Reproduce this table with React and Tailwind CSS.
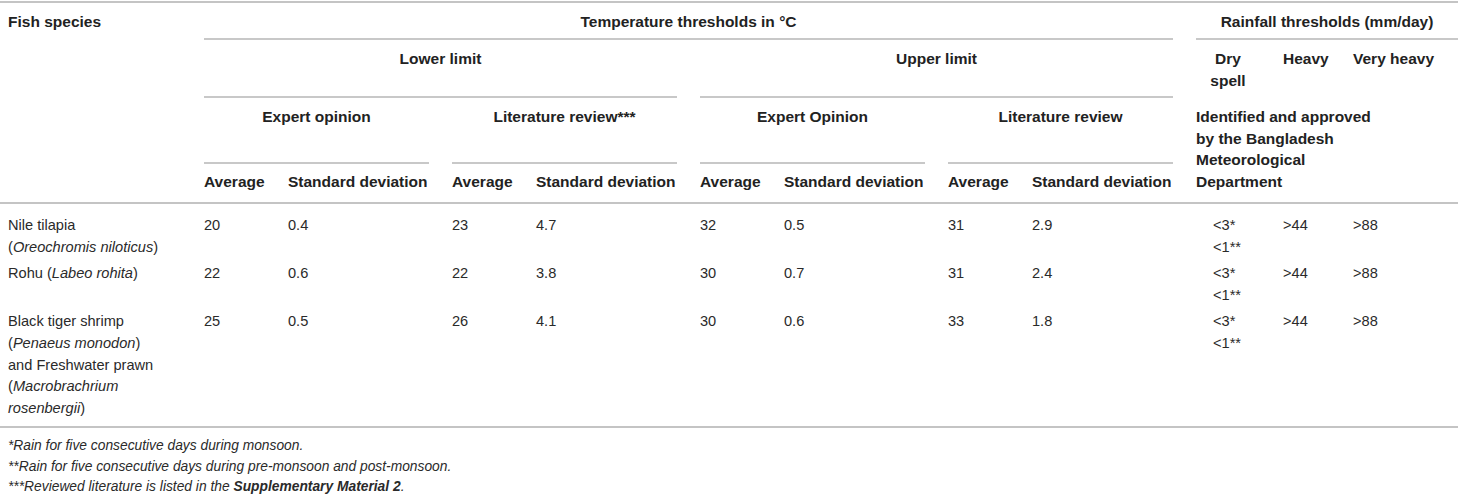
export default function App() {
  const cols =
    "grid grid-cols-[173px_61px_141px_61px_141px_61px_141px_61px_141px_64px_47px_105px] gap-x-[23px]";
  const rows = [
    {
      name: (
        <>
          Nile tilapia
          <br />(<i>Oreochromis niloticus</i>)
        </>
      ),
      v: ["20", "0.4", "23", "4.7", "32", "0.5", "31", "2.9"],
    },
    {
      name: (
        <>
          Rohu (<i>Labeo rohita</i>)
        </>
      ),
      v: ["22", "0.6", "22", "3.8", "30", "0.7", "31", "2.4"],
    },
    {
      name: (
        <>
          Black tiger shrimp
          <br />(<i>Penaeus monodon</i>)
          <br />
          and Freshwater prawn
          <br />(<i>Macrobrachrium</i>
          <br />
          <i>rosenbergii</i>)
        </>
      ),
      v: ["25", "0.5", "26", "4.1", "30", "0.6", "33", "1.8"],
    },
  ];
  const hb = "border-b-2 border-[#c8c8c8]";
  return (
    <div className="w-[1458px] h-[495px] bg-white font-['Liberation_Sans',Arial,sans-serif] text-[#222] overflow-hidden">
      {/* header */}
      <div className="mt-px border-t-2 border-b-2 border-[#c4c4c4] pl-[8px]">
        <div
          className={`${cols} grid-rows-[37px_58px_66px_38px] text-[15.5px] font-bold leading-[21.5px]`}
        >
          <div className="col-start-1 row-start-1 row-span-4 pt-[8px]">Fish species</div>
          <div className={`col-start-2 col-span-8 row-start-1 pt-[8px] text-center ${hb}`}>
            Temperature thresholds in °C
          </div>
          <div className={`col-start-10 col-span-3 row-start-1 pt-[8px] text-center ${hb}`}>
            Rainfall thresholds (mm/day)
          </div>

          <div className={`col-start-2 col-span-4 row-start-2 pt-[8px] text-center ${hb}`}>
            Lower limit
          </div>
          <div className={`col-start-6 col-span-4 row-start-2 pt-[8px] text-center ${hb}`}>
            Upper limit
          </div>
          <div className="col-start-10 row-start-2 pt-[8px] text-center whitespace-nowrap">
            Dry
            <br />
            spell
          </div>
          <div className="col-start-11 row-start-2 pt-[8px] whitespace-nowrap">Heavy</div>
          <div className="col-start-12 row-start-2 pt-[8px] whitespace-nowrap">Very heavy</div>

          <div className={`col-start-2 col-span-2 row-start-3 pt-[8px] text-center ${hb}`}>
            Expert opinion
          </div>
          <div className={`col-start-4 col-span-2 row-start-3 pt-[8px] text-center ${hb}`}>
            Literature review***
          </div>
          <div className={`col-start-6 col-span-2 row-start-3 pt-[8px] text-center ${hb}`}>
            Expert Opinion
          </div>
          <div className={`col-start-8 col-span-2 row-start-3 pt-[8px] text-center ${hb}`}>
            Literature review
          </div>
          <div className="col-start-10 col-span-3 row-start-3 row-span-2 pt-[8px] leading-[21.7px] whitespace-nowrap">
            Identified and approved
            <br />
            by the Bangladesh
            <br />
            Meteorological
            <br />
            Department
          </div>

          {["Average", "Standard deviation", "Average", "Standard deviation", "Average", "Standard deviation", "Average", "Standard deviation"].map(
            (t, i) => (
              <div
                key={i}
                className="row-start-4 pt-[7px] whitespace-nowrap"
                style={{ gridColumnStart: i + 2 }}
              >
                {t}
              </div>
            )
          )}
        </div>
      </div>

      {/* body */}
      <div className="border-b-2 border-[#c4c4c4] pl-[8px] pt-[11px] pb-[7px]">
        <div className={`${cols} gap-y-[5px] text-[14.6px] leading-[21.6px] text-[#2a2a2a]`}>
          {rows.map((r, ri) => (
            <div key={ri} className="contents">
              <div className="whitespace-nowrap">{r.name}</div>
              {r.v.map((x, i) => (
                <div key={i}>{x}</div>
              ))}
              <div className="pl-[17px] whitespace-nowrap">
                &lt;3*
                <br />
                &lt;1**
              </div>
              <div>&gt;44</div>
              <div>&gt;88</div>
            </div>
          ))}
        </div>
      </div>

      {/* footnotes */}
      <div className="pl-[8px] pt-[8px] text-[13.8px] leading-[20.5px] italic text-[#2a2a2a]">
        <div>*Rain for five consecutive days during monsoon.</div>
        <div>**Rain for five consecutive days during pre-monsoon and post-monsoon.</div>
        <div>
          ***Reviewed literature is listed in the <b>Supplementary Material 2</b>.
        </div>
      </div>
    </div>
  );
}
